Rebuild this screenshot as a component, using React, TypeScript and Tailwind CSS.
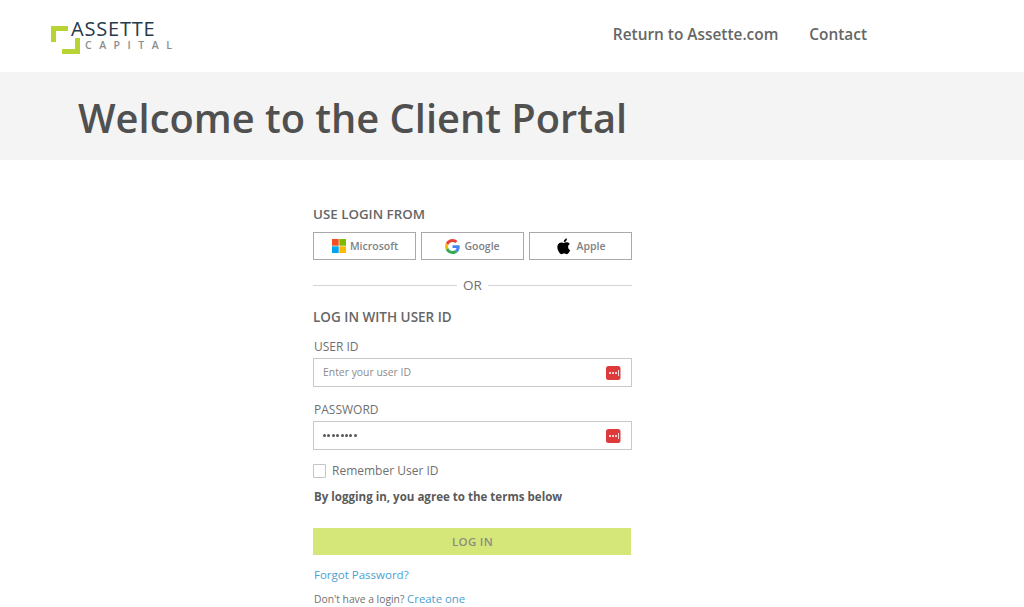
const font = { fontFamily: '"Open Sans", sans-serif' };

function Pw() {
  return (
    <svg width="15" height="14" viewBox="0 0 15 14" className="shrink-0">
      <rect x="0" y="0" width="14.500" height="14" rx="2.500" fill="#dd3b3b" />
      <circle cx="4" cy="7" r="1" fill="#fff" />
      <circle cx="7" cy="7" r="1" fill="#fff" />
      <circle cx="10" cy="7" r="1" fill="#fff" />
      <rect x="12" y="4" width="0.8" height="6" fill="#fff" />
    </svg>
  );
}

function Social({ icon, label }: { icon: React.ReactNode; label: string }) {
  return (
    <div className="flex h-[28px] flex-1 items-center justify-center gap-[4px] border border-[#a9a9a9] text-[10.500px] font-semibold text-[#808183]">
      {icon}
      <span className="pt-px">{label}</span>
    </div>
  );
}

export default function App() {
  return (
    <div className="h-[607px] w-[1024px] overflow-hidden bg-white text-[#555]" style={font}>
      <header className="flex h-[72px] items-start">
        <div className="ml-[50px] mt-[18px] flex">
          <svg width="31" height="30" viewBox="0 0 31 30" className="mt-[7px] shrink-0">
            <path d="M1 1H18V6H6V17H1Z M30 13V29H12V24H25V13Z" fill="#b8d334" />
          </svg>
          <div className="-ml-[11px] flex flex-col">
            <span className="pl-px text-[20px] leading-[21px] tracking-[0.8px] text-[#25394b]">ASSETTE</span>
            <span className="ml-[15px] text-[10.500px] font-semibold leading-[13px] tracking-[7.500px] text-[#8a8d8f]">CAPITAL</span>
          </div>
        </div>
        <nav className="ml-auto mr-[157px] mt-[25px] flex gap-[31px] text-[15.400px] font-semibold leading-[20px] text-[#666]">
          <span>Return to Assette.com</span>
          <span>Contact</span>
        </nav>
      </header>
      <div className="flex h-[88px] items-center bg-[#f4f4f4] pl-[78px] pt-[4px]">
        <h1 className="text-[39.800px] font-semibold leading-[48px] text-[#505050]">Welcome to the Client Portal</h1>
      </div>
      <main className="ml-[313px] w-[319px] pt-[46px]">
        <div className="text-[13.350px] font-semibold leading-[16px] text-[#666]">USE LOGIN FROM</div>
        <div className="mt-[10px] flex gap-[5px]">
          <Social
            label="Microsoft"
            icon={
              <svg width="14" height="14" viewBox="0 0 14 14" className="ml-px">
                <rect width="6.700" height="6.700" fill="#f25022" />
                <rect x="7.300" width="6.700" height="6.700" fill="#7fba00" />
                <rect y="7.300" width="6.700" height="6.700" fill="#00a4ef" />
                <rect x="7.300" y="7.300" width="6.700" height="6.700" fill="#ffb900" />
              </svg>
            }
          />
          <Social
            label="Google"
            icon={
              <svg width="15" height="15" viewBox="0 0 48 48">
                <path fill="#EA4335" d="M24 9.500c3.540 0 6.710 1.220 9.210 3.600l6.850-6.850C35.900 2.380 30.470 0 24 0 14.620 0 6.510 5.380 2.560 13.220l7.980 6.190C12.430 13.720 17.740 9.500 24 9.500z" />
                <path fill="#4285F4" d="M46.980 24.550c0-1.570-.15-3.090-.38-4.550H24v9.020h12.940c-.58 2.960-2.260 5.480-4.780 7.180l7.730 6c4.510-4.180 7.090-10.360 7.090-17.650z" />
                <path fill="#FBBC05" d="M10.530 28.590c-.48-1.450-.76-2.990-.76-4.590s.27-3.140.76-4.590l-7.980-6.190C.92 16.460 0 20.120 0 24c0 3.880.92 7.540 2.560 10.780l7.970-6.190z" />
                <path fill="#34A853" d="M24 48c6.480 0 11.930-2.130 15.890-5.810l-7.730-6c-2.150 1.450-4.920 2.300-8.160 2.300-6.260 0-11.570-4.220-13.470-9.910l-7.980 6.190C6.510 42.620 14.620 48 24 48z" />
              </svg>
            }
          />
          <Social
            label="Apple"
            icon={
              <svg width="17" height="17" viewBox="0 0 24 24">
                <path fill="#000" d="M17.050 12.540c-.03-2.800 2.290-4.150 2.390-4.210-1.300-1.900-3.330-2.160-4.050-2.190-1.720-.17-3.370 1.010-4.240 1.010-.88 0-2.230-.99-3.660-.96-1.880.03-3.620 1.090-4.590 2.780-1.960 3.390-.5 8.420 1.410 11.170.93 1.350 2.040 2.860 3.490 2.810 1.400-.06 1.930-.91 3.630-.91 1.690 0 2.170.91 3.650.88 1.510-.02 2.470-1.370 3.390-2.730 1.070-1.560 1.510-3.080 1.530-3.160-.03-.01-2.930-1.120-2.950-4.490zM14.270 4.310c.77-.94 1.290-2.240 1.150-3.540-1.110.05-2.460.74-3.260 1.680-.71.83-1.340 2.160-1.170 3.430 1.240.1 2.510-.63 3.280-1.570z" />
              </svg>
            }
          />
        </div>
        <div className="mt-[16px] flex items-center gap-[6px] text-[13.500px] leading-[18px] text-[#707070]">
          <div className="h-px flex-1 bg-[#d5d5d5]" />
          <span>OR</span>
          <div className="h-px flex-1 bg-[#d5d5d5]" />
        </div>
        <div className="mt-[15px] text-[13.500px] font-semibold leading-[16px] text-[#666]">LOG IN WITH USER ID</div>
        <div className="ml-px mt-[14px] text-[12px] leading-[16px] text-[#707070]">USER ID</div>
        <div className="mt-[3px] flex h-[29px] items-center justify-between border border-[#c9c9c9] pl-[9px] pr-[10px] text-[10.400px] text-[#8b8b8b]">
          <span>Enter your user ID</span>
          <Pw />
        </div>
        <div className="ml-px mt-[15px] text-[12px] leading-[16px] text-[#707070]">PASSWORD</div>
        <div className="mt-[3px] flex h-[29px] items-center justify-between border border-[#c9c9c9] pl-[9px] pr-[10px]">
          <div className="flex gap-[1.400px]">
            {[0, 1, 2, 3, 4, 5, 6, 7].map((i) => (
              <span key={i} className="h-[3px] w-[3px] rounded-full bg-[#555]" />
            ))}
          </div>
          <Pw />
        </div>
        <div className="mt-[13px] flex items-center gap-[6px]">
          <span className="h-[14px] w-[13px] rounded-[1px] border border-[#c4c4c4]" />
          <span className="text-[12px] leading-[16px] text-[#707070]">Remember User ID</span>
        </div>
        <div className="ml-px mt-[10px] text-[11.550px] font-bold leading-[16px] text-[#5a5a5a]">By logging in, you agree to the terms below</div>
        <div className="mr-px mt-[23px] flex h-[27px] items-center justify-center bg-[#d6e77a] pl-px text-[11.500px] font-semibold tracking-[0.3px] text-[#8b8d7c]">LOG IN</div>
        <div className="ml-px mt-[12px] text-[11.500px] leading-[16px] text-[#4b9fd0]">Forgot Password?</div>
        <div className="ml-px mt-[8px] text-[10.300px] leading-[16px] text-[#707070]">
          Don't have a login? <span className="text-[11.400px] text-[#4b9fd0]">Create one</span>
        </div>
      </main>
    </div>
  );
}
